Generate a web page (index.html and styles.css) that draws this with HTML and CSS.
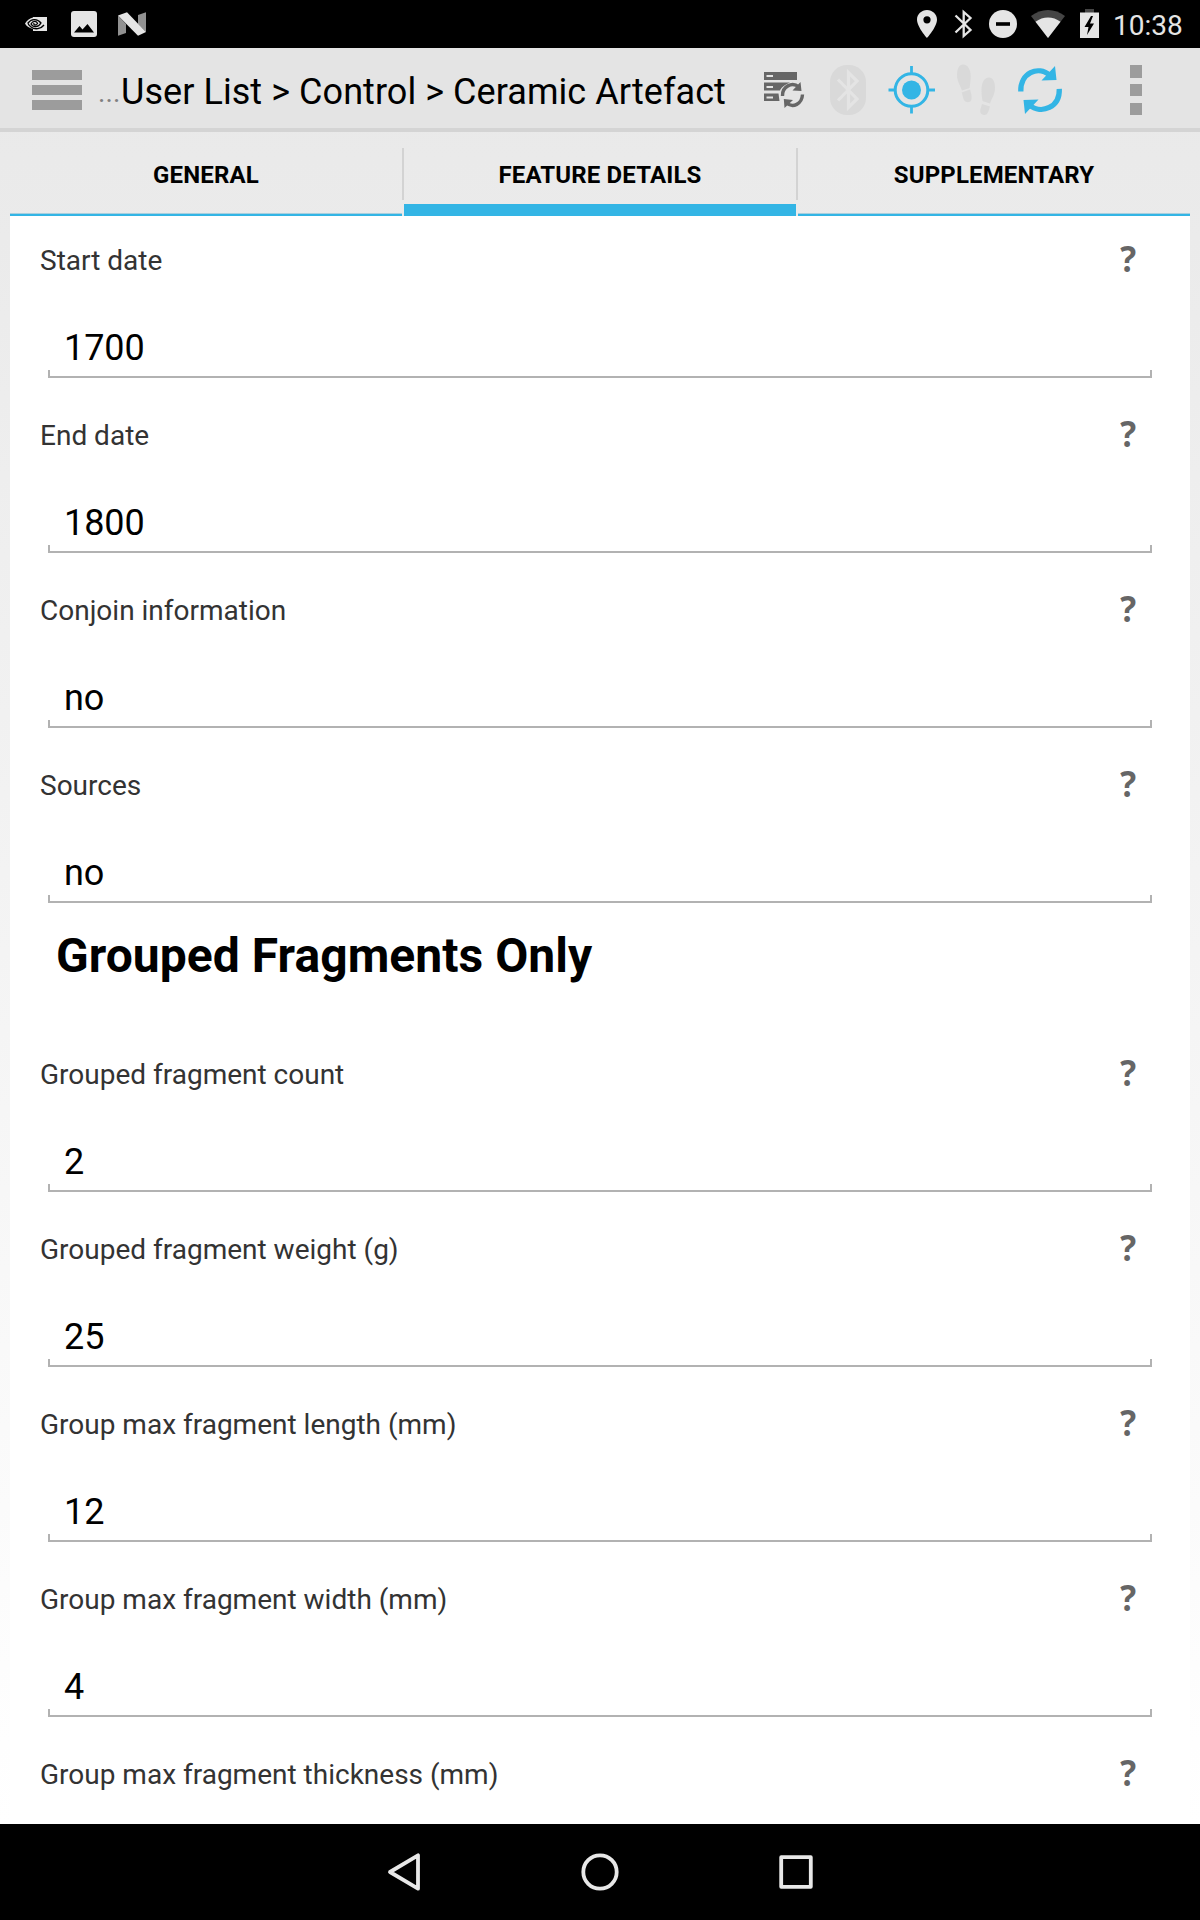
FILE: index.html
```html
<!DOCTYPE html>
<html lang="en">
<head>
<meta charset="utf-8">
<title>Ceramic Artefact</title>
<link rel="stylesheet" href="styles.css">
</head>
<body>
<div class="screen">
  <div class="status">
    <svg width="160" height="48" viewBox="0 0 160 48">
      <path fill="#e5e5e5" d="M33 17H47V31H33V29C29 28 26 26 25 23.500C27 20 30 18 33 17.500Z"/>
      <path fill="none" stroke="#000" stroke-width="1.300" d="M44 25C41 29 35 30 31 27C29 25.500 28 24 28 23C31 19 37 18 41 23C38 28 33 27.500 31 24C33 20 37 21 37.500 23.500C36 26 33 25 34 23"/>
      <rect x="71" y="11" width="26" height="26" rx="3" fill="#e5e5e5"/>
      <path fill="#000" d="M74 32.500L79.500 26L82.500 29.500L87.500 24L94 32.500Z"/>
      <path fill="#919191" d="M118 15.500L126 24V33L118 35.700ZM138 15L146 12.300V32L138 24Z"/>
      <path fill="#e5e5e5" d="M118 15.500L127 12.300L146 32L138 35.700Z"/>
    </svg>
    <div class="status-right">
      <svg width="202" height="48" viewBox="910 0 202 48">
        <path fill="#e5e5e5" fill-rule="evenodd" d="M927 10C921.500 10 917 14.300 917 19.500C917 27 927 38 927 38S937 27 937 19.500C937 14.300 932.500 10 927 10ZM927 16.200A3.600 3.600 0 1 1 927 23.400A3.600 3.600 0 1 1 927 16.200Z"/>
        <path fill="none" stroke="#e5e5e5" stroke-width="2.300" d="M955.500 15.500L970.500 30L963.700 36V12L970.500 18L955.500 32.500"/>
        <circle cx="1003" cy="24" r="14" fill="#e5e5e5"/>
        <rect x="996" y="22.200" width="14" height="3.600" fill="#000"/>
        <path fill="#454545" d="M1048 38L1031 16C1041 8 1055 8 1065 16Z"/>
        <path fill="#e5e5e5" d="M1048 38L1035.500 21.700C1043 16 1053 16 1060.500 21.700Z"/>
        <path fill="#454545" d="M1085 9H1094V13H1085Z"/>
        <path fill="#e5e5e5" d="M1080 12.500H1099V38H1080Z"/>
        <path fill="#000" d="M1091 16L1084.500 27H1088.500L1087 35L1094 23.500H1090L1093 16Z"/>
      </svg>
      <span class="clock">10:38</span>
    </div>
  </div>

  <header class="bar">
    <div class="burger"><i></i><i></i><i></i></div>
    <h1 class="crumbs"><span class="dots">...</span><span>User List &gt; Control &gt; Ceramic Artefact</span></h1>
    <svg class="actions" width="400" height="80" viewBox="760 48 400 80">
      <g fill="#666">
        <path d="M764 72H797V80H764ZM764 82.500H790C784 85 781 88 780 90.500H764ZM764 93.500H778.500L779.500 101H764Z"/>
        <path fill="#e4e4e4" d="M766.500 75H773V77H766.500ZM766.500 86H773V88H766.500ZM766.500 96.500H773V98.500H766.500Z"/>
        <path fill="none" stroke="#666" stroke-width="3.400" d="M782.500 96C782 86.500 792 81.500 799 87M802.500 94.500C802 104 793 108.500 786.500 103"/>
        <path d="M800.500 82L801.500 91L792.500 90.500ZM784.500 108L783.800 99L793 100Z"/>
      </g>
      <rect x="830" y="65" width="36" height="50" rx="17" fill="#d9d9d9"/>
      <path fill="none" stroke="#e4e4e4" stroke-width="3.200" d="M838 79.500L857 99L848.500 107.500V72.500L857 81L838 100.500"/>
      <circle cx="911.500" cy="90" r="16.300" fill="none" stroke="#33b5e5" stroke-width="3"/>
      <circle cx="911.500" cy="90" r="9.500" fill="#33b5e5"/>
      <path fill="none" stroke="#33b5e5" stroke-width="2.800" d="M911.500 66V74M911.500 106V113.500M888.500 90H896M927 90H935"/>
      <g fill="#d9d9d9">
        <path d="M963 64.500C968 64.500 971 70 970.700 77C970.500 81 970 85 969.500 88L962 90.500C960 85 957 81 957 75C957 69 959 64.500 963 64.500Z"/>
        <path d="M961.700 92.500L970 89.500C971 93 972 96 971.500 99C971 103 965.500 103.500 963.700 99.500Z"/>
        <path d="M989 77.500C984 77.500 981.500 83 981.500 90C981.500 94 982 98 982.500 101L990 103.500C992 98 995 94 995 88C995 82 993 77.500 989 77.500Z"/>
        <path d="M982 104L990 106.500C989 110 988 115 984.500 115C980 115 979.500 111 981 107.500Z"/>
      </g>
      <path fill="none" stroke="#33b5e5" stroke-width="5.300" d="M1020.800 91.500C1020 73 1038 65 1050 75.500M1059.300 88.800C1060 107 1042 115 1029 105"/>
      <path fill="#33b5e5" d="M1055 66L1056.500 80L1041.500 80.500ZM1025 114L1023.500 100L1038.500 99.500Z"/>
      <path fill="#9c9c9c" d="M1130 65H1142V78H1130ZM1130 84H1142V96H1130ZM1130 103H1142V115H1130Z"/>
    </svg>
  </header>

  <nav class="tabs">
    <div class="tab"><span>GENERAL</span></div>
    <div class="sep"></div>
    <div class="tab active"><span>FEATURE DETAILS</span></div>
    <div class="sep"></div>
    <div class="tab"><span>SUPPLEMENTARY</span></div>
  </nav>

  <main class="form">
    <section class="field"><div class="label"><span>Start date</span><b>?</b></div><div class="input">1700</div></section>
    <section class="field"><div class="label"><span>End date</span><b>?</b></div><div class="input">1800</div></section>
    <section class="field"><div class="label"><span>Conjoin information</span><b>?</b></div><div class="input">no</div></section>
    <section class="field"><div class="label"><span>Sources</span><b>?</b></div><div class="input">no</div></section>
    <h2 class="group">Grouped Fragments Only</h2>
    <section class="field"><div class="label"><span>Grouped fragment count</span><b>?</b></div><div class="input">2</div></section>
    <section class="field"><div class="label"><span>Grouped fragment weight (g)</span><b>?</b></div><div class="input">25</div></section>
    <section class="field"><div class="label"><span>Group max fragment length (mm)</span><b>?</b></div><div class="input">12</div></section>
    <section class="field"><div class="label"><span>Group max fragment width (mm)</span><b>?</b></div><div class="input">4</div></section>
    <section class="field"><div class="label"><span>Group max fragment thickness (mm)</span><b>?</b></div></section>
  </main>

  <footer class="softkeys">
    <svg width="460" height="96" viewBox="370 1824 460 96" fill="none" stroke="#e8e8e8" stroke-width="3.800" stroke-linejoin="round">
      <path d="M418 1855.300V1888.700L390 1872Z"/>
      <circle cx="600" cy="1872" r="16.700"/>
      <rect x="781.200" y="1857.200" width="29.600" height="29.600"/>
    </svg>
  </footer>
</div>
</body>
</html>
```
FILE: styles.css
```css
* { box-sizing: border-box; }
body { margin: 0; font-family: Roboto, sans-serif; color: #000; }
.screen {
  width: 1200px;
  height: 1920px;
  display: flex;
  flex-direction: column;
  overflow: hidden;
  background: linear-gradient(#e8e8e8, #fff 1824px);
}
.status {
  height: 48px;
  flex: none;
  display: flex;
  justify-content: space-between;
  background: #000;
}
.status-right { display: flex; width: 290px; }
.clock { margin-left: 1px; font-size: 28px; line-height: 51px; color: #e5e5e5; }
.bar {
  height: 84px;
  flex: none;
  display: flex;
  background: #e4e4e4;
  border-bottom: 4px solid #d4d4d4;
}
.burger {
  width: 50px;
  margin: 22px 0 0 32px;
  display: flex;
  flex-direction: column;
  gap: 5px;
}
.burger i { height: 10px; background: #9c9c9c; }
.crumbs {
  width: 662px;
  margin: 0 0 0 16px;
  display: flex;
  font-size: 36px;
  font-weight: 400;
  line-height: 89px;
  letter-spacing: 0.06px;
  white-space: nowrap;
}
.dots { width: 23px; font-size: 28px; color: #808080; }
.tabs { height: 84px; flex: none; display: flex; margin: 0 10px; }
.tab {
  flex: 1;
  display: flex;
  justify-content: center;
  font-size: 24px;
  font-weight: 700;
  line-height: 86px;
  letter-spacing: 0.15px;
  border-bottom: 2px solid #33b5e5;
  box-shadow: inset 0 -1px #a9cfde;
}
.tab.active { border-bottom-width: 12px; box-shadow: none; }
.sep { width: 2px; height: 52px; margin-top: 16px; background: #d3d3d3; }
.form {
  flex: 1;
  min-height: 0;
  margin: 0 10px;
  overflow: hidden;
  background: #fff;
}
.field { height: 175px; padding: 37px 38px 0 30px; }
.field:first-child { height: 162px; padding-top: 24px; }
.label {
  height: 40px;
  display: flex;
  justify-content: space-between;
  font-size: 28px;
  line-height: 42px;
  color: #333;
}
.label b {
  width: 33px;
  font: 700 36px/38px "Open Sans", sans-serif;
  color: #666;
  transform: scaleX(0.93);
}
.input {
  height: 60px;
  margin: 38px 0 0 8px;
  padding-left: 16px;
  font-size: 36px;
  line-height: 60px;
  letter-spacing: -0.1px;
  background:
    linear-gradient(#b2b2b2, #b2b2b2) left bottom / 2px 8px no-repeat,
    linear-gradient(#b2b2b2, #b2b2b2) right bottom / 2px 8px no-repeat,
    linear-gradient(#b2b2b2, #b2b2b2) left bottom / 100% 2px no-repeat;
}
.group {
  height: 114px;
  margin: 0;
  padding-left: 46px;
  font-size: 48px;
  line-height: 106px;
  letter-spacing: 0.05px;
}
.softkeys {
  height: 96px;
  flex: none;
  display: flex;
  justify-content: center;
  background: #000;
}
```
